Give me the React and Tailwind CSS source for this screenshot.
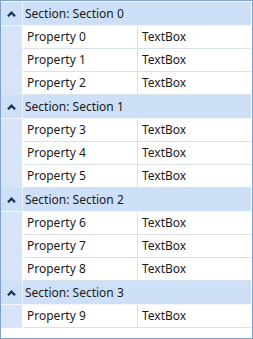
const sections = [
  { name: "Section 0", props: [0, 1, 2] },
  { name: "Section 1", props: [3, 4, 5] },
  { name: "Section 2", props: [6, 7, 8] },
  { name: "Section 3", props: [9] },
];

function Caret() {
  return (
    <svg width="9" height="6" viewBox="0 0 9 6" className="block">
      <path d="M1 5.2 L4.5 1.7 L8 5.2" fill="none" stroke="#17325f" strokeWidth="2.3" />
    </svg>
  );
}

export default function App() {
  return (
    <div
      className="w-[253px] h-[339px] border border-[#7ea2cf] bg-white pt-px pr-px text-[12px] text-[#1a1a1a]"
      style={{ fontFamily: '"Noto Sans", "Open Sans", sans-serif' }}
    >
      {sections.map((s) => (
        <div key={s.name}>
          <div className="flex h-[24px] border-b border-[#f3f7fc] bg-[#cde0f7]">
            <div className="w-[21px] flex items-center justify-center">
              <Caret />
            </div>
            <div className="w-px bg-[#eef4fc]" />
            <div className="flex items-center pl-[2px] leading-none">
              Section: {s.name}
            </div>
          </div>
          <div className="flex">
            <div className="w-[21px] bg-[#d5e4f7]" />
            <div className="w-px bg-white" />
            <div className="flex-1">
              {s.props.map((p) => (
                <div
                  key={p}
                  className="flex h-[23px] border-b border-[#d8e1ec] leading-none"
                >
                  <div className="w-[115px] flex items-center pl-[4px] border-r border-[#d8e1ec]">
                    Property {p}
                  </div>
                  <div className="flex-1 flex items-center pl-[4px]">TextBox</div>
                </div>
              ))}
            </div>
          </div>
        </div>
      ))}
    </div>
  );
}
